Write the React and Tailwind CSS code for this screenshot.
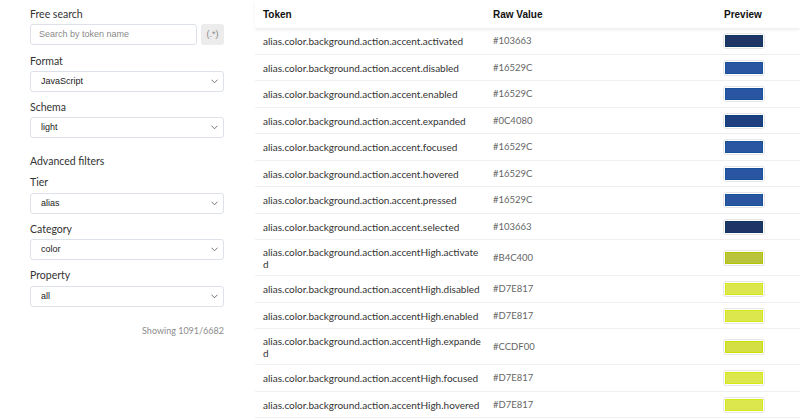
import React from 'react';

const rows = [
  { token: 'alias.color.background.action.accent.activated', value: '#103663', fill: '#1f3566', border: '#103663' },
  { token: 'alias.color.background.action.accent.disabled', value: '#16529C', fill: '#2a55a0', border: '#16529c' },
  { token: 'alias.color.background.action.accent.enabled', value: '#16529C', fill: '#2a55a0', border: '#16529c' },
  { token: 'alias.color.background.action.accent.expanded', value: '#0C4080', fill: '#1d3f80', border: '#0c4080' },
  { token: 'alias.color.background.action.accent.focused', value: '#16529C', fill: '#2a55a0', border: '#16529c' },
  { token: 'alias.color.background.action.accent.hovered', value: '#16529C', fill: '#2a55a0', border: '#16529c' },
  { token: 'alias.color.background.action.accent.pressed', value: '#16529C', fill: '#2a55a0', border: '#16529c' },
  { token: 'alias.color.background.action.accent.selected', value: '#103663', fill: '#1f3566', border: '#103663' },
  { token: ['alias.color.background.action.accentHigh.activate', 'd'], value: '#B4C400', fill: '#b9c43c', border: '#b4c400' },
  { token: 'alias.color.background.action.accentHigh.disabled', value: '#D7E817', fill: '#dbe74d', border: '#d7e817' },
  { token: 'alias.color.background.action.accentHigh.enabled', value: '#D7E817', fill: '#dbe74d', border: '#d7e817' },
  { token: ['alias.color.background.action.accentHigh.expande', 'd'], value: '#CCDF00', fill: '#d3df42', border: '#ccdf00' },
  { token: 'alias.color.background.action.accentHigh.focused', value: '#D7E817', fill: '#dbe74d', border: '#d7e817' },
  { token: 'alias.color.background.action.accentHigh.hovered', value: '#D7E817', fill: '#dbe74d', border: '#d7e817' },
];

const poppins = { fontFamily: 'Lato, "Open Sans", sans-serif' };
const system = { fontFamily: '"Liberation Sans", Arial, sans-serif' };

const Chevron = () => (
  <svg width="7" height="5" viewBox="0 0 7 5" fill="none" className="shrink-0">
    <path d="M0.8 1 L3.5 3.8 L6.2 1" stroke="#666" strokeWidth="0.9" strokeLinecap="round" strokeLinejoin="round" />
  </svg>
);

const Label = ({ children, className = '' }) => (
  <div className={`text-[10.5px] leading-[14px] text-[#333] ${className}`} style={poppins}>
    {children}
  </div>
);

const Select = ({ value, className = '' }) => (
  <div
    className={`h-[21px] w-full rounded-[3px] border border-[#dde2e8] bg-white flex items-center justify-between pl-[10px] pr-[5px] ${className}`}
  >
    <span className="text-[9px] text-[#222]" style={system}>{value}</span>
    <Chevron />
  </div>
);

const Sidebar = () => (
  <aside className="w-[194px] ml-[30px] pt-[7px] shrink-0">
    <Label>Free search</Label>
    <div className="flex gap-[4px] mt-[3px]">
      <div className="h-[21px] flex-1 rounded-[3px] border border-[#dde2e8] flex items-center pl-[8px]">
        <span className="text-[9px] text-[#8a8a8a]" style={system}>Search by token name</span>
      </div>
      <div className="h-[21px] w-[23px] rounded-[3px] bg-[#ececec] flex items-center justify-center text-[9px] text-[#888]" style={system}>
        (.*)
      </div>
    </div>

    <Label className="mt-[9px]">Format</Label>
    <Select value="JavaScript" className="mt-[3px]" />

    <Label className="mt-[8px]">Schema</Label>
    <Select value="light" className="mt-[3px]" />

    <Label className="mt-[16px]">Advanced filters</Label>

    <Label className="mt-[7px]">Tier</Label>
    <Select value="alias" className="mt-[4px]" />

    <Label className="mt-[8px]">Category</Label>
    <Select value="color" className="mt-[3px]" />

    <Label className="mt-[8px]">Property</Label>
    <Select value="all" className="mt-[4px]" />

    <div className="mt-[17px] text-right text-[9px] leading-[14px] text-[#8c8c8c]" style={poppins}>
      Showing 1091/6682
    </div>
  </aside>
);

const Swatch = ({ fill, border }) => (
  <div className="inline-flex rounded-[3px] border border-[#e6e6e6] bg-white p-[1px]">
    <div className="w-[38px] h-[12px] border" style={{ backgroundColor: fill, borderColor: border }} />
  </div>
);

const TokenTable = () => (
  <div className="flex-1 ml-[31px] min-w-0">
    <div className="grid grid-cols-[230px_231px_1fr] h-[28px] items-center shadow-[0_2px_3px_rgba(0,0,0,0.07)] relative z-10 text-[10px] font-bold text-[#111]" style={system}>
      <div className="pl-[8px]">Token</div>
      <div className="pl-[8px]">Raw Value</div>
      <div className="pl-[8px]">Preview</div>
    </div>
    {rows.map((r, i) => {
      const wrapped = Array.isArray(r.token);
      return (
        <div
          key={i}
          className={`grid grid-cols-[230px_231px_1fr] items-center border-b border-[#efefef] text-[10px] ${
            wrapped ? 'pt-[6px] pb-[5px] leading-[12px]' : 'pt-[8px] pb-[7.5px] leading-[10px]'
          }`}
          style={poppins}
        >
          <div className="pl-[8px] text-[#333] whitespace-nowrap">
            {wrapped ? (
              <>
                {r.token[0]}
                <br />
                {r.token[1]}
              </>
            ) : (
              r.token
            )}
          </div>
          <div className="pl-[8px] text-[#666] text-[9.5px]">{r.value}</div>
          <div className="pl-[7px] h-[10px] flex items-center">
            <Swatch fill={r.fill} border={r.border} />
          </div>
        </div>
      );
    })}
  </div>
);

export default function App() {
  return (
    <div className="w-[800px] h-[419px] overflow-hidden bg-white flex">
      <Sidebar />
      <TokenTable />
    </div>
  );
}
